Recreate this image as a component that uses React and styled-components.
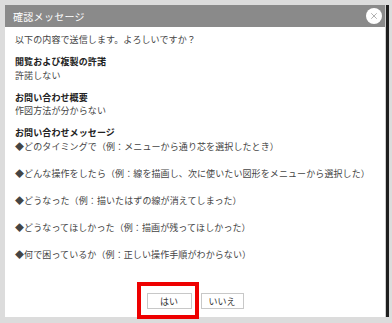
import React from 'react';
import styled, { createGlobalStyle } from 'styled-components';
import { X } from 'lucide-react';

const GlobalStyle = createGlobalStyle`
	html, body {
		margin: 0;
		padding: 0;
		background: #dcdcdc;
		font-family: "Noto Sans CJK JP", "Noto Sans", sans-serif;
	}
`;

const Page = styled.div`
	padding: 5px 0 0 5px;
	height: 323px;
	box-sizing: border-box;
	overflow: hidden;
`;

const Dialog = styled.div`
	width: 380px;
	height: 312px;
	background: #fff;
	border-right: 1px solid #cfcfcf;
	box-shadow: 3px 0 0 #1e1e1e;
	display: flex;
	flex-direction: column;
`;

const TitleBar = styled.div`
	height: 22px;
	background: #8a8a8a;
	display: flex;
	align-items: center;
	justify-content: space-between;
	padding: 0 3px 0 8px;
`;

const Title = styled.span`
	color: #fff;
	font-size: 10px;
	letter-spacing: 0.3px;
`;

const CloseButton = styled.button`
	width: 16px;
	height: 16px;
	border-radius: 50%;
	border: none;
	background: #fff;
	padding: 0;
	display: flex;
	align-items: center;
	justify-content: center;
	color: #8a8a8a;
`;

const Content = styled.div`
	padding: 6px 10px 0 10px;
	font-size: 9px;
	line-height: 13.5px;
	color: #444;
	letter-spacing: 0.1px;
`;

const Line = styled.div`
	margin-top: ${props => props.gap || 0}px;
	font-weight: ${props => (props.bold ? 700 : 400)};
	color: ${props => (props.bold ? '#222' : '#444')};
	white-space: nowrap;
`;

const ButtonBar = styled.div`
	margin-top: auto;
	padding-bottom: 8px;
	display: flex;
	justify-content: center;
	gap: 9px;
`;

const Button = styled.button`
	position: relative;
	width: ${props => props.width}px;
	height: 16px;
	padding: 0;
	background: #fff;
	border: 1px solid #c8c8c8;
	font-family: inherit;
	font-size: 9px;
	color: #333;
	&::after {
		content: '';
		display: ${props => (props.marked ? 'block' : 'none')};
		position: absolute;
		top: -12px;
		left: -11px;
		right: -8px;
		bottom: -11px;
		border: 4px solid #ee0000;
	}
`;

const sections = [
	{ label: '閲覧および複製の許諾', value: '許諾しない' },
	{ label: 'お問い合わせ概要', value: '作図方法が分からない' },
];

const messages = [
	'◆どのタイミングで（例：メニューから通り芯を選択したとき）',
	'◆どんな操作をしたら（例：線を描画し、次に使いたい図形をメニューから選択した）',
	'◆どうなった（例：描いたはずの線が消えてしまった）',
	'◆どうなってほしかった（例：描画が残ってほしかった）',
	'◆何で困っているか（例：正しい操作手順がわからない）',
];

export default function App() {
	return (
		<Page>
			<GlobalStyle />
			<Dialog>
				<TitleBar>
					<Title>確認メッセージ</Title>
					<CloseButton>
						<X size={10} strokeWidth={1.6} />
					</CloseButton>
				</TitleBar>
				<Content>
					<Line>以下の内容で送信します。よろしいですか？</Line>
					{sections.map(s => (
						<React.Fragment key={s.label}>
							<Line bold gap={8.5}>{s.label}</Line>
							<Line>{s.value}</Line>
						</React.Fragment>
					))}
					<Line bold gap={8.5}>お問い合わせメッセージ</Line>
					{messages.map((m, i) => (
						<Line key={m} gap={i === 0 ? 0 : 13.5}>{m}</Line>
					))}
				</Content>
				<ButtonBar>
					<Button width={45} marked>はい</Button>
					<Button width={43}>いいえ</Button>
				</ButtonBar>
			</Dialog>
		</Page>
	);
}
